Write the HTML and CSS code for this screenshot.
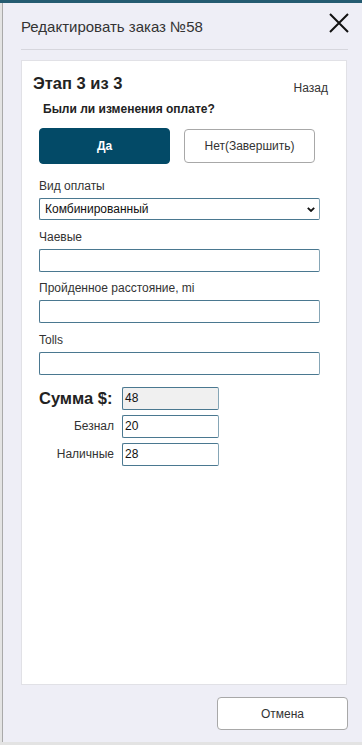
FILE: index.html
```html
<!DOCTYPE html>
<html lang="ru">
<head>
<meta charset="utf-8">
<title>Редактировать заказ №58</title>
<link rel="stylesheet" href="styles.css">
</head>
<body>
<div class="window">
  <div class="dialog">
    <header class="dlg-head">
      <h1 class="dlg-title">Редактировать заказ №58</h1>
      <button class="close" aria-label="Закрыть">
        <svg width="20" height="20" viewBox="0 0 20 20"><path d="M1 1 L19 19 M19 1 L1 19" stroke="#111" stroke-width="2" fill="none"/></svg>
      </button>
    </header>
    <section class="card">
      <div class="step-row">
        <h2 class="step">Этап 3 из 3</h2>
        <a class="back">Назад</a>
      </div>
      <div class="form">
        <p class="question">Были ли изменения оплате?</p>
        <div class="choice">
          <button class="btn btn-primary">Да</button>
          <button class="btn btn-outline btn-no">Нет(Завершить)</button>
        </div>
        <div class="field field-first">
          <label class="label">Вид оплаты</label>
          <div class="control select">
            <span>Комбинированный</span>
            <svg class="chev" width="8" height="5" viewBox="0 0 8 5"><path d="M0.8 0.8 L4 4 L7.2 0.8" stroke="#111" stroke-width="1.8" fill="none"/></svg>
          </div>
        </div>
        <div class="field">
          <label class="label">Чаевые</label>
          <div class="control input"></div>
        </div>
        <div class="field">
          <label class="label">Пройденное расстояние, mi</label>
          <div class="control input"></div>
        </div>
        <div class="field">
          <label class="label">Tolls</label>
          <div class="control input"></div>
        </div>
        <div class="sum-grid">
          <span class="sum-label">Сумма $:</span>
          <div class="control num num-ro">48</div>
          <span class="row-label">Безнал</span>
          <div class="control num">20</div>
          <span class="row-label">Наличные</span>
          <div class="control num">28</div>
        </div>
      </div>
    </section>
    <footer class="dlg-foot">
      <button class="btn btn-outline cancel">Отмена</button>
    </footer>
  </div>
</div>
</body>
</html>
```
FILE: styles.css
```css
html, body {
  margin: 0;
  padding: 0;
}
body {
  background: #e3e3e3;
  font-family: "Liberation Sans", Arial, sans-serif;
  color: #333;
}
.window {
  height: 745px;
  box-sizing: border-box;
  border-top: 3px solid #245b71;
  padding: 0 0 3px 2px;
  display: flex;
}
.dialog {
  flex: 1;
  border-left: 1px solid #a9a9a9;
  background: #eeeef6;
  display: flex;
  flex-direction: column;
  padding: 0 14px 12px 18px;
}
.dlg-head {
  height: 46px;
  flex: none;
  display: flex;
  justify-content: space-between;
  align-items: flex-start;
  border-bottom: 1px solid #d6d6dd;
}
.dlg-title {
  margin: 14.5px 0 0;
  font-size: 15px;
  font-weight: 400;
  line-height: 17px;
  color: #333;
}
.close {
  margin: 10px -1px 0 0;
  width: 20px;
  height: 20px;
  padding: 0;
  border: 0;
  background: none;
  display: block;
}
.close svg {
  display: block;
}
.card {
  flex: 1;
  margin: 10px 1px 0 0;
  background: #fff;
  border: 1px solid #e1e1e6;
  padding: 12px 18px 0 11px;
}
.step-row {
  display: flex;
  justify-content: space-between;
  align-items: flex-start;
  height: 20px;
}
.step {
  margin: 0;
  font-size: 16.5px;
  font-weight: 700;
  line-height: 20px;
  color: #222;
}
.back {
  margin-top: 4.5px;
  font-size: 12px;
  line-height: 20px;
  color: #333;
}
.form {
  padding: 0 8px 0 6px;
}
.question {
  margin: 8px 0 0 4px;
  font-size: 12px;
  font-weight: 700;
  line-height: 16px;
  color: #222;
}
.choice {
  display: flex;
  align-items: center;
  gap: 14px;
  margin-top: 11px;
}
.btn {
  width: 131px;
  height: 36px;
  box-sizing: border-box;
  border-radius: 4px;
  font-family: "Liberation Sans", Arial, sans-serif;
  font-size: 12px;
  padding: 0;
}
.btn-primary {
  background: #034a67;
  border: 1px solid #034a67;
  color: #fff;
  font-weight: 700;
}
.btn-outline {
  background: #fff;
  border: 1px solid #a8a8a8;
  color: #333;
}
.btn-no {
  height: 34px;
}
.field {
  margin-top: 8.5px;
}
.field-first {
  margin-top: 14px;
}
.label {
  display: block;
  font-size: 12px;
  line-height: 16px;
  color: #333;
  margin-bottom: 4px;
}
.control {
  box-sizing: border-box;
  border: 1px solid #4a7890;
  border-right-color: #86a6b6;
  border-radius: 2px;
  background: #fff;
  font-size: 12px;
  color: #111;
}
.input {
  height: 23px;
}
.select {
  height: 22px;
  display: flex;
  align-items: center;
  justify-content: space-between;
  padding: 0 4px 0 5px;
}
.chev {
  display: block;
}
.sum-grid {
  display: grid;
  grid-template-columns: 75px 97px;
  grid-auto-rows: 23px;
  column-gap: 8px;
  row-gap: 5px;
  align-items: center;
  margin-top: 12px;
}
.sum-label {
  font-size: 16.5px;
  font-weight: 700;
  color: #222;
  white-space: nowrap;
}
.row-label {
  text-align: right;
  font-size: 12px;
  color: #333;
}
.num {
  height: 23px;
  display: flex;
  align-items: center;
  padding-left: 2px;
}
.num-ro {
  background: #f0f0f0;
}
.dlg-foot {
  flex: none;
  display: flex;
  justify-content: flex-end;
  margin-top: 12px;
}
.cancel {
  height: 33px;
}
```
